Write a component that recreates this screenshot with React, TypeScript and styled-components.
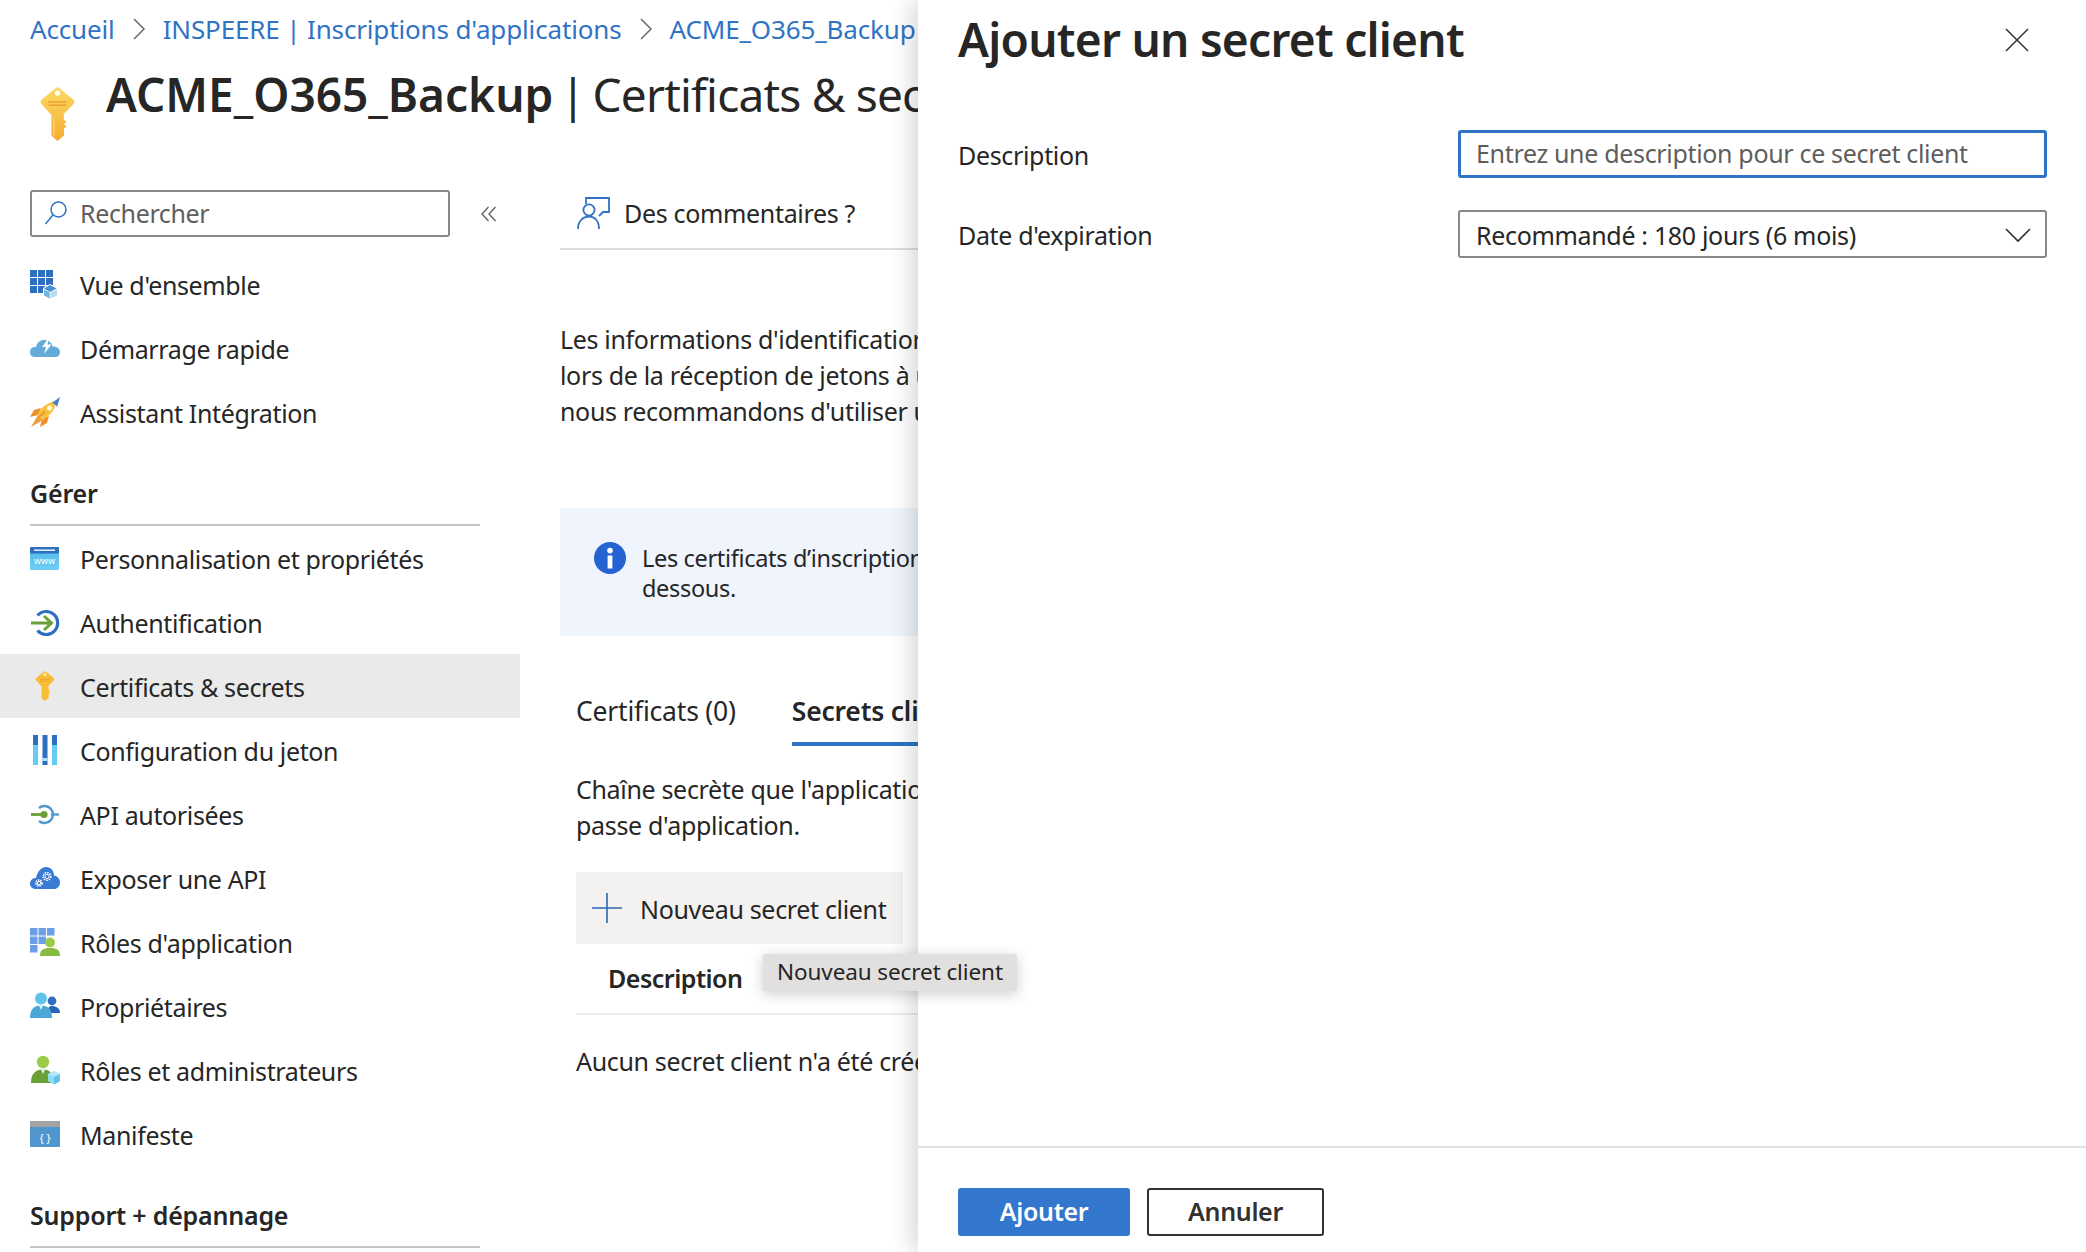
import { FC, ReactNode } from "react";
import styled, { createGlobalStyle } from "styled-components";

const Global = createGlobalStyle`
  html, body {
    margin: 0;
    padding: 0;
    background: #fff;
  }
  * {
    box-sizing: border-box;
  }
`;

const Page = styled.div`
  position: relative;
  display: flex;
  width: 2086px;
  height: 1252px;
  overflow: hidden;
  font-family: "Noto Sans", "Open Sans", sans-serif;
  font-size: 25px;
  letter-spacing: -0.33px;
  color: #262626;
  background: #fff;
`;

const Blade = styled.div`
  width: 918px;
  flex: none;
  overflow: hidden;
  white-space: nowrap;
`;

const Breadcrumb = styled.nav`
  display: flex;
  align-items: center;
  gap: 17px;
  height: 58px;
  padding-left: 30px;
  font-size: 26px;
  letter-spacing: -0.15px;
  color: #2f73c6;
`;

const TitleRow = styled.div`
  display: flex;
  align-items: flex-start;
  gap: 30px;
  height: 132px;
  padding-left: 39px;
  letter-spacing: 0;

  svg {
    margin-top: 29px;
  }
`;

const PageTitle = styled.h1`
  margin: 0;
  font-size: 46px;
  line-height: 72px;
  font-weight: 400;
  color: #262626;

  b {
    font-weight: 600;
  }
`;

const TitleSeparator = styled.span`
  word-spacing: -5px;
`;

const TitleSection = styled.span`
  letter-spacing: -0.8px;
`;

const Columns = styled.div`
  display: flex;
`;

const Sidebar = styled.aside`
  width: 520px;
  flex: none;
  letter-spacing: -0.36px;
`;

const SearchRow = styled.div`
  display: flex;
  align-items: center;
  gap: 30px;
  padding-left: 30px;
  height: 62px;
  padding-bottom: 15px;
`;

const SearchBox = styled.div`
  display: flex;
  align-items: center;
  gap: 12px;
  width: 420px;
  height: 47px;
  padding: 0 0 2px 12px;
  border: 2px solid #8a8886;
  border-radius: 3px;
  color: #605e5c;
`;

const NavList = styled.div`
  display: flex;
  flex-direction: column;
`;

const NavRow = styled.div<{ $active?: boolean }>`
  display: flex;
  align-items: center;
  gap: 20px;
  height: 64px;
  padding-left: 30px;
  padding-top: 1px;
  background: ${(p) => (p.$active ? "#ebeaea" : "transparent")};
`;

const IconSlot = styled.span`
  display: flex;
  width: 30px;
  height: 30px;
  flex: none;
  margin-top: -1px;
`;

const SectionTitle = styled.div`
  width: 450px;
  margin: 29px 0 0 30px;
  height: 53px;
  border-bottom: 2px solid #c8c6c4;
  line-height: 41px;
  letter-spacing: -0.2px;
  font-weight: 600;
`;

const Main = styled.main`
  flex: 1;
  min-width: 0;
  padding-left: 40px;
  overflow: hidden;
`;

const CommandBar = styled.div`
  display: flex;
  align-items: center;
  gap: 14px;
  height: 60px;
  padding: 0 0 13px 17px;
  border-bottom: 2px solid #dcdcdc;
`;

const Copy = styled.p`
  margin: 0;
  line-height: 36px;
`;

const Intro = styled(Copy)`
  margin-top: 71px;
`;

const InfoBox = styled.div`
  display: flex;
  gap: 16px;
  height: 128px;
  margin-top: 79px;
  padding: 35px 0 0 34px;
  border-radius: 3px;
  background: #eff4fd;
  font-size: 23.5px;
  line-height: 30px;

  svg {
    margin-top: -1px;
  }
`;

const Pane = styled.div`
  padding-left: 16px;
`;

const Tabs = styled.div`
  display: flex;
  gap: 56px;
  height: 58px;
  margin-top: 56px;
`;

const Tab = styled.div<{ $active?: boolean }>`
  flex: none;
  height: 54px;
  padding-top: 1px;
  font-size: 26.5px;
  line-height: 36px;
  letter-spacing: -0.2px;
  font-weight: ${(p) => (p.$active ? 600 : 400)};
  border-bottom: ${(p) => (p.$active ? "4px solid #2f73c6" : "none")};
`;

const PaneCopy = styled(Copy)`
  margin-top: 21px;
`;

const NewButton = styled.div`
  display: flex;
  align-items: center;
  gap: 18px;
  width: 327px;
  height: 72px;
  margin-top: 29px;
  padding: 1px 0 0 16px;
  background: #f3f2f1;

  svg {
    margin-top: -1px;
  }
`;

const TableHead = styled.div`
  height: 71px;
  padding: 16px 0 0 32px;
  border-bottom: 2px solid #edebe9;
  font-weight: 600;
  letter-spacing: -0.5px;
  line-height: 36px;
`;

const Empty = styled(Copy)`
  margin-top: 28px;
`;

const Tooltip = styled.div`
  position: absolute;
  left: 763px;
  top: 954px;
  z-index: 5;
  width: 254px;
  height: 37px;
  border-radius: 2px;
  background: #e2e0de;
  box-shadow: 0 3px 14px rgba(0, 0, 0, 0.2);
  font-size: 22.5px;
  letter-spacing: -0.1px;
  line-height: 35px;
  text-align: center;
  white-space: nowrap;
`;

const Panel = styled.section`
  position: relative;
  z-index: 2;
  flex: 1;
  display: flex;
  flex-direction: column;
  background: #fff;
  box-shadow: -6px 0 22px rgba(0, 0, 0, 0.16);
`;

const PanelHeader = styled.header`
  display: flex;
  align-items: center;
  justify-content: space-between;
  height: 80px;
  padding: 0 57px 0 40px;
`;

const PanelTitle = styled.h2`
  margin: 0 0 2px;
  font-size: 46px;
  font-weight: 600;
  letter-spacing: -0.72px;
  line-height: 60px;
`;

const Form = styled.div`
  flex: 1;
  display: grid;
  grid-template-columns: 500px 589px;
  grid-auto-rows: 48px;
  row-gap: 32px;
  align-content: start;
  padding: 50px 0 0 40px;
`;

const Label = styled.label`
  align-self: center;
  padding-top: 2px;
`;

const Field = styled.div<{ $focus?: boolean }>`
  display: flex;
  align-items: center;
  justify-content: space-between;
  padding: ${(p) => (p.$focus ? "0 14px 2px 15px" : "2px 14px 0 16px")};
  border: ${(p) => (p.$focus ? "3px solid #2f73c6" : "2px solid #8a8886")};
  border-radius: 3px;
  color: ${(p) => (p.$focus ? "#605e5c" : "#262626")};
  white-space: nowrap;
`;

const Footer = styled.footer`
  display: flex;
  gap: 17px;
  height: 106px;
  padding: 40px 0 0 40px;
  border-top: 2px solid #e1e1e1;
`;

const Button = styled.div<{ $primary?: boolean }>`
  display: flex;
  align-items: center;
  justify-content: center;
  height: 48px;
  width: ${(p) => (p.$primary ? 172 : 177)}px;
  padding-bottom: 3px;
  border-radius: 3px;
  border: 2px solid ${(p) => (p.$primary ? "#3376cd" : "#323130")};
  background: ${(p) => (p.$primary ? "#3376cd" : "#fff")};
  color: ${(p) => (p.$primary ? "#fff" : "#323130")};
  font-weight: 600;
`;

const Svg: FC<{ w?: number; h?: number; box?: string; children: ReactNode }> = ({
  w = 30,
  h = 30,
  box = "0 0 30 30",
  children,
}) => (
  <svg width={w} height={h} viewBox={box} style={{ flex: "none", display: "block" }}>
    {children}
  </svg>
);

const Chevron = () => (
  <Svg w={14} h={24} box="0 0 14 24">
    <path d="M2 2 L12 12 L2 22" fill="none" stroke="#6b6b6b" strokeWidth="1.5" />
  </Svg>
);

const keyPath =
  "M10 .2 Q10.6 .2 11.2 .8 L18.8 7 Q20 8.2 18.8 9.6 L13.5 15 V18 L15 19.4 L13.6 20.6 L15 22 L13.6 23.2 V27 L10 30 L6.6 27 V15.5 L1.2 9.6 Q0 8.2 1.2 7 L8.8 .8 Q9.4 .2 10 .2 Z";

const KeyShape: FC<{ id: string; w: number; h: number }> = ({ id, w, h }) => (
  <Svg w={w} h={h} box="0 0 20 30">
    <defs>
      <linearGradient id={id} x1="0" y1="0" x2="0" y2="1">
        <stop offset="0" stopColor="#fcd964" />
        <stop offset="1" stopColor="#f4ad30" />
      </linearGradient>
    </defs>
    <path d={keyPath} fill={`url(#${id})`} />
    <circle cx="10" cy="3.4" r="1.5" fill="#fff" />
    <path d="M5 8.3 H15 M5 10.1 H15" stroke="#ee9f2c" strokeWidth=".8" />
    <path d="M8 16 V27" stroke="#f9cf62" strokeWidth="1" />
  </Svg>
);

const OverviewIcon = () => (
  <Svg>
    {[0, 8, 16].map((x) =>
      [1, 9, 17].map((y) => <rect key={`${x}-${y}`} x={x} y={y} width="7" height="7" fill="#2f6fc1" />)
    )}
    <path d="M13 19 L20 15 L27 19 V27 L20 31 L13 27 Z" fill="#fff" />
    <path d="M14 19.5 L20 16 L26.5 19.5 L20 23 Z" fill="#4a8fd0" />
    <path d="M14 20.5 L19.6 23.4 V29.5 L14 26.5 Z" fill="#6db3df" />
    <path d="M20.4 23.4 L27 20.5 V26.5 L20.4 29.5 Z" fill="#b6def2" />
  </Svg>
);

const BoltCloudIcon = () => (
  <Svg>
    <path
      d="M5 24 C1 24 0 21 0 19 C0 15.5 3 13.5 6 14 C7 9 11 6.5 15 7 C19 7.5 22 10 22.5 13.5 C26.5 13 30 15.5 30 19 C30 22 28 24 25 24 Z"
      fill="#63abd9"
    />
    <path d="M19 4.5 L12 14 H16 L14 21 L21.5 11.5 H17.5 Z" fill="#fff" />
  </Svg>
);

const RocketIcon = () => (
  <Svg>
    <path d="M11 11 L4 13 L0 20 L8 18 Z" fill="#ee8f2a" />
    <path d="M19 19 L17 26 L10 30 L12 22 Z" fill="#ee8f2a" />
    <path d="M8 18 L1 30 L13 23 Z" fill="#f09a3a" />
    <path d="M25 4 C17 6 10 11 7 18 L12 23 C19 20 25 13 26 5 Z" fill="#f6c23d" />
    <path d="M22 6 L30 0 L27 10 C26 8 24 6.5 22 6 Z" fill="#3f7fc9" />
    <circle cx="19.5" cy="11" r="2.6" fill="#fff6dc" />
    <path d="M9 20 L15 14.5" stroke="#e98a2a" strokeWidth="1.5" />
  </Svg>
);

const WwwIcon = () => (
  <Svg>
    <defs>
      <linearGradient id="www" x1="0" y1="0" x2="0" y2="1">
        <stop offset="0" stopColor="#4fb3e8" />
        <stop offset="1" stopColor="#6fd0f5" />
      </linearGradient>
    </defs>
    <rect x="0" y="4" width="29" height="23" rx="1" fill="url(#www)" />
    <rect x="0" y="4" width="29" height="6.5" rx="1" fill="#2f6fc1" />
    <rect x="4" y="6.4" width="21" height="1.6" fill="#d8ecfa" />
    <text x="14.5" y="21" fontSize="9" letterSpacing="0" textAnchor="middle" fill="#fff" fontFamily="Noto Sans, sans-serif">
      www
    </text>
  </Svg>
);

const AuthIcon = () => (
  <Svg>
    <path d="M7.5 8.5 A11.5 11.5 0 1 1 7.5 23.5" fill="none" stroke="#2f6fc1" strokeWidth="3.2" />
    <path d="M1 16 H21 M14 9 L21.5 16 L14 23" fill="none" stroke="#6aa038" strokeWidth="3" />
  </Svg>
);

const BarsIcon = () => (
  <Svg>
    <rect x="3" y="0" width="5" height="30" fill="#63cdf2" />
    <rect x="3" y="0" width="5" height="10" fill="#2f6fc1" />
    <rect x="12.5" y="0" width="5" height="30" fill="#2f6fc1" />
    <rect x="12.5" y="23" width="5" height="3" fill="#b6e4f7" />
    <rect x="22" y="0" width="5" height="30" fill="#63cdf2" />
    <rect x="22" y="0" width="5" height="10" fill="#2f6fc1" />
  </Svg>
);

const ApiIcon = () => (
  <Svg>
    <path d="M9 9 A8.5 8.5 0 1 1 9 22" fill="none" stroke="#4f9ac9" strokeWidth="2.4" />
    <path d="M21 15.5 H29" stroke="#4f9ac9" strokeWidth="2.4" />
    <path d="M1 15.5 H14" stroke="#6aa038" strokeWidth="2.8" />
    <circle cx="14" cy="15.5" r="3.6" fill="#6aa038" />
  </Svg>
);

const Gear: FC<{ x: number; y: number; r: number }> = ({ x, y, r }) => (
  <g>
    <circle cx={x} cy={y} r={r} fill="none" stroke="#fff" strokeWidth="1.5" strokeDasharray="1.6 .9" />
    <circle cx={x} cy={y} r={r * 0.55} fill="none" stroke="#fff" strokeWidth="1" />
  </g>
);

const GearCloudIcon = () => (
  <Svg>
    <path
      d="M6 26 C2 26 0 23.5 0 20.5 C0 17 3 15 6 15 C7 9.5 11 4 16 4 C21 4 24 8 24 12.5 C27.5 13 30 16 30 19.5 C30 23.5 27 26 24 26 Z"
      fill="#3a7bd5"
    />
    <Gear x={9} y={20} r={3} />
    <Gear x={17} y={13.5} r={3.8} />
  </Svg>
);

const AppRolesIcon = () => (
  <Svg>
    {[0, 8.5, 17].map((x) =>
      [1, 9.5, 18].map((y) =>
        x > 8 && y > 9 ? null : (
          <rect key={`${x}-${y}`} x={x} y={y} width="7.5" height="7.5" fill="#6d9eea" />
        )
      )
    )}
    <rect x="8.5" y="9.5" width="7.5" height="7.5" fill="#6d9eea" />
    <path d="M10 29 C10 23 13 21 20 21 C27 21 30 23 30 29 Z" fill="#86bb42" />
    <circle cx="20" cy="15.5" r="5" fill="#9ccb4a" />
  </Svg>
);

const OwnersIcon = () => (
  <Svg>
    <circle cx="22" cy="10" r="4.4" fill="#2f6fc1" />
    <path d="M17 22 C17 17 19 15 22 15 C26 15 30 17 30 22 Z" fill="#2566bb" />
    <circle cx="11" cy="7.5" r="6" fill="#5fc4ec" />
    <path d="M0 27 C0 18 4 14.5 11 14.5 C18 14.5 22 18 22 27 Z" fill="#4aa8d6" />
    <path d="M9 14.5 H13 L11 19 Z" fill="#e7f6fd" />
  </Svg>
);

const AdminIcon = () => (
  <Svg>
    <circle cx="13" cy="7" r="6.2" fill="#9ccb4a" />
    <path d="M1 28 C1 19 5 14.5 13 14.5 C20 14.5 24 19 24 28 Z" fill="#6aa038" />
    <path d="M11 14.5 H15 L13 19 Z" fill="#f2f8e6" />
    <path d="M18 19 L24 16 L30 19 V26 L24 29.5 L18 26 Z" fill="#8edbf5" />
    <path d="M18 19 L24 22 L30 19 L24 16 Z" fill="#b4e8f9" />
    <path d="M24 22 V29.5 L30 26 V19 Z" fill="#5fc4ec" />
  </Svg>
);

const ManifestIcon = () => (
  <Svg>
    <rect x="0" y="2" width="30" height="26" rx="1" fill="#4f96cf" />
    <rect x="0" y="2" width="30" height="6" rx="1" fill="#a3a3a3" />
    <text x="15" y="22.5" fontSize="11" letterSpacing="0" textAnchor="middle" fill="#fff" fontFamily="Noto Sans, sans-serif">
      {"{ }"}
    </text>
  </Svg>
);

const SidebarKey = () => (
  <Svg>
    <g transform="translate(5 0)">
      <path d={keyPath} fill="#f7bd35" />
      <circle cx="10" cy="3.4" r="1.5" fill="#fff1c4" />
      <path d="M5 8.3 H15 M5 10.1 H15" stroke="#ee9f2c" strokeWidth=".8" />
    </g>
  </Svg>
);

const SearchIcon = () => (
  <Svg w={24} h={26} box="0 0 24 26">
    <circle cx="14.5" cy="9.5" r="7.5" fill="none" stroke="#2f73c6" strokeWidth="1.5" />
    <path d="M9 15 L1.5 24" stroke="#2f73c6" strokeWidth="1.5" />
  </Svg>
);

const Collapse = () => (
  <Svg w={18} h={18} box="0 0 18 18">
    <path d="M8.5 2 L2 9 L8.5 16 M15.5 2 L9 9 L15.5 16" fill="none" stroke="#605e5c" strokeWidth="1.3" />
  </Svg>
);

const FeedbackIcon = () => (
  <Svg w={33} h={32} box="0 0 33 32">
    <path d="M9 7 V1 H32 V15 H26 L22 19" fill="none" stroke="#2f73c6" strokeWidth="1.8" />
    <circle cx="12" cy="13" r="5.6" fill="none" stroke="#2f73c6" strokeWidth="1.8" />
    <path d="M1 32 C1 24 6 19.5 12 19.5 C18 19.5 22 24 22 32" fill="none" stroke="#2f73c6" strokeWidth="1.8" />
  </Svg>
);

const InfoIcon = () => (
  <Svg w={32} h={32} box="0 0 32 32">
    <circle cx="16" cy="16" r="16" fill="#2463d1" />
    <rect x="13.6" y="13.5" width="4.8" height="13" fill="#fff" />
    <circle cx="16" cy="8.6" r="2.8" fill="#fff" />
  </Svg>
);

const PlusIcon = () => (
  <Svg w={30} h={30} box="0 0 30 30">
    <path d="M15 0 V30 M0 15 H30" stroke="#2f67b1" strokeWidth="1.6" />
  </Svg>
);

const CloseIcon = () => (
  <Svg w={24} h={24} box="0 0 24 24">
    <path d="M1 1 L23 23 M23 1 L1 23" stroke="#323130" strokeWidth="1.5" />
  </Svg>
);

const SelectChevron = () => (
  <Svg w={26} h={16} box="0 0 26 16">
    <path d="M1 2 L13 14 L25 2" fill="none" stroke="#323130" strokeWidth="1.6" />
  </Svg>
);

type NavItem = { label: string; icon: ReactNode; active?: boolean };

const quickNav: NavItem[] = [
  { label: "Vue d'ensemble", icon: <OverviewIcon /> },
  { label: "Démarrage rapide", icon: <BoltCloudIcon /> },
  { label: "Assistant Intégration", icon: <RocketIcon /> },
];

const manageNav: NavItem[] = [
  { label: "Personnalisation et propriétés", icon: <WwwIcon /> },
  { label: "Authentification", icon: <AuthIcon /> },
  { label: "Certificats & secrets", icon: <SidebarKey />, active: true },
  { label: "Configuration du jeton", icon: <BarsIcon /> },
  { label: "API autorisées", icon: <ApiIcon /> },
  { label: "Exposer une API", icon: <GearCloudIcon /> },
  { label: "Rôles d'application", icon: <AppRolesIcon /> },
  { label: "Propriétaires", icon: <OwnersIcon /> },
  { label: "Rôles et administrateurs", icon: <AdminIcon /> },
  { label: "Manifeste", icon: <ManifestIcon /> },
];

const Nav: FC<{ items: NavItem[] }> = ({ items }) => (
  <NavList>
    {items.map((item) => (
      <NavRow key={item.label} $active={item.active}>
        <IconSlot>{item.icon}</IconSlot>
        {item.label}
      </NavRow>
    ))}
  </NavList>
);

export default function App() {
  return (
    <Page>
      <Global />
      <Blade>
        <Breadcrumb>
          <span>Accueil</span>
          <Chevron />
          <span>INSPEERE | Inscriptions d'applications</span>
          <Chevron />
          <span>ACME_O365_Backup</span>
        </Breadcrumb>
        <TitleRow>
          <KeyShape id="headKey" w={37} h={54} />
          <PageTitle>
            <b>ACME_O365_Backup</b>
            <TitleSeparator> | </TitleSeparator>
            <TitleSection>Certificats &amp; secrets</TitleSection>
          </PageTitle>
        </TitleRow>
        <Columns>
          <Sidebar>
            <SearchRow>
              <SearchBox>
                <SearchIcon />
                Rechercher
              </SearchBox>
              <Collapse />
            </SearchRow>
            <Nav items={quickNav} />
            <SectionTitle>Gérer</SectionTitle>
            <Nav items={manageNav} />
            <SectionTitle>Support + dépannage</SectionTitle>
          </Sidebar>
          <Main>
            <CommandBar>
              <FeedbackIcon />
              Des commentaires ?
            </CommandBar>
            <Intro>
              Les informations d'identification permettent
              <br />
              lors de la réception de jetons à un emplacement
              <br />
              nous recommandons d'utiliser un certificat
            </Intro>
            <InfoBox>
              <InfoIcon />
              <div>
                Les certificats d’inscription d'application
                <br />
                dessous.
              </div>
            </InfoBox>
            <Pane>
              <Tabs>
                <Tab>Certificats (0)</Tab>
                <Tab $active>Secrets client (0)</Tab>
              </Tabs>
              <PaneCopy>
                Chaîne secrète que l'application utilise
                <br />
                passe d'application.
              </PaneCopy>
              <NewButton>
                <PlusIcon />
                Nouveau secret client
              </NewButton>
              <TableHead>Description</TableHead>
              <Empty>Aucun secret client n'a été créé pour cette application.</Empty>
            </Pane>
          </Main>
        </Columns>
      </Blade>
      <Tooltip>Nouveau secret client</Tooltip>
      <Panel>
        <PanelHeader>
          <PanelTitle>Ajouter un secret client</PanelTitle>
          <CloseIcon />
        </PanelHeader>
        <Form>
          <Label>Description</Label>
          <Field $focus>Entrez une description pour ce secret client</Field>
          <Label>Date d'expiration</Label>
          <Field>
            Recommandé : 180 jours (6 mois)
            <SelectChevron />
          </Field>
        </Form>
        <Footer>
          <Button $primary>Ajouter</Button>
          <Button>Annuler</Button>
        </Footer>
      </Panel>
    </Page>
  );
}
